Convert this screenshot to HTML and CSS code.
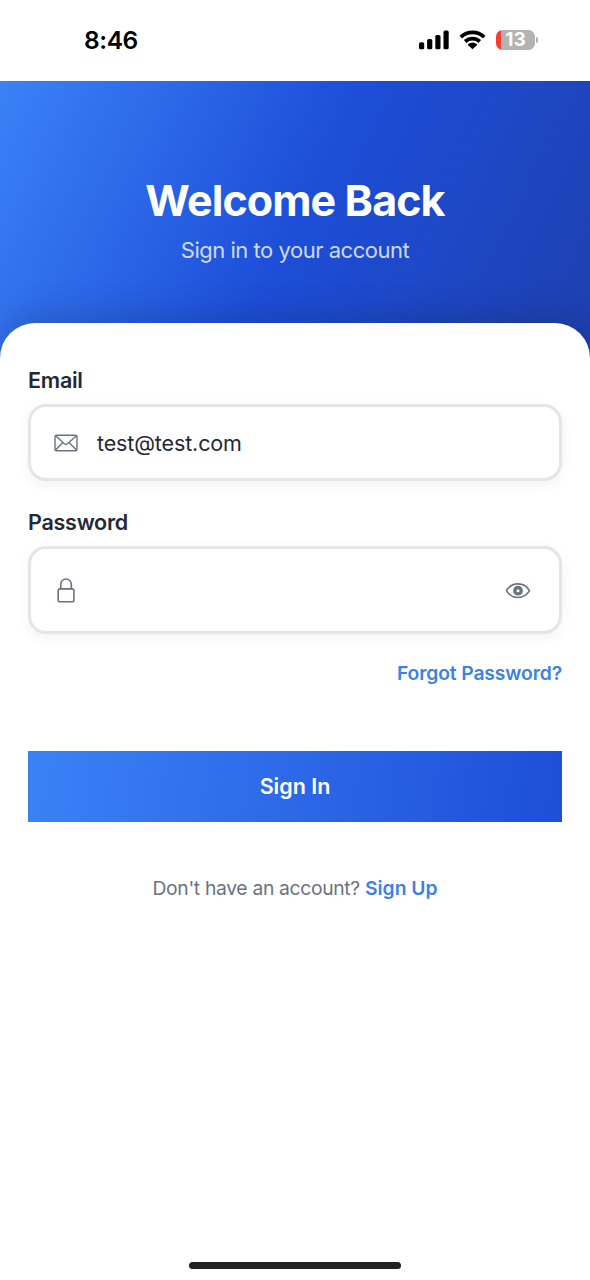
FILE: index.html
```html
<!DOCTYPE html>
<html lang="en">
<head>
<meta charset="utf-8">
<title>Sign In</title>
<link rel="stylesheet" href="styles.css">
</head>
<body>
<div class="screen">
  <div class="status-bar">
    <span class="time">8:46</span>
    <div class="indicators">
      <svg class="signal" width="30" height="20" viewBox="0 0 30 20">
        <rect x="0" y="12.2" width="5.2" height="7.1" rx="1.6"/>
        <rect x="8.1" y="9" width="5.2" height="10.3" rx="1.6"/>
        <rect x="16.3" y="5" width="5.2" height="14.3" rx="1.6"/>
        <rect x="24.5" y="0.6" width="5.2" height="18.7" rx="1.6"/>
      </svg>
      <svg class="wifi" width="27" height="20" viewBox="0 0 27 20">
        <path class="wifi-arc" d="M1.8 7.1a17 17 0 0 1 23.4 0M6.2 11.5a10.8 10.8 0 0 1 14.6 0"/>
        <path d="M13.5 19.3 9.2 15.2q-.5-.6.1-1.1a6.7 6.7 0 0 1 8.4 0q.6.5.1 1.1z"/>
      </svg>
      <div class="battery">
        <div class="battery-body"><span>13</span></div>
        <div class="battery-cap"></div>
      </div>
    </div>
  </div>
  <header class="hero">
    <h1 class="title">Welcome Back</h1>
    <p class="subtitle">Sign in to your account</p>
  </header>
  <main class="card">
    <label class="label">Email</label>
    <div class="field field-email">
      <svg class="icon mail" width="26" height="26" viewBox="0 0 26 26">
        <rect x="2" y="5.2" width="22" height="15.5" rx="1.8"/>
        <path d="M2.6 5.8 11.4 13.8q1.6 1.3 3.2 0L23.4 5.8M2.6 20.1l7.3-7.6M23.4 20.1l-7.3-7.6"/>
      </svg>
      <span class="value">test@test.com</span>
    </div>
    <label class="label label-password">Password</label>
    <div class="field field-password">
      <svg class="icon lock" width="26" height="26" viewBox="0 0 26 26">
        <rect x="5.2" y="11.9" width="15.7" height="12.8" rx="1.8"/>
        <path d="M7.7 11.9V7.3a5.3 5.3 0 0 1 10.6 0v4.6"/>
      </svg>
      <svg class="icon eye" width="26" height="26" viewBox="0 0 26 26">
        <path d="M1.5 13.7C6.8 4.6 19.2 4.6 24.5 13.7 19.2 22.8 6.8 22.8 1.5 13.7z"/>
        <circle class="iris" cx="13" cy="13.7" r="3.2"/>
      </svg>
    </div>
    <a class="forgot">Forgot Password?</a>
    <button class="submit">Sign In</button>
    <p class="signup">Don't have an account? <a class="signup-link">Sign Up</a></p>
    <div class="home-indicator"></div>
  </main>
</div>
</body>
</html>
```
FILE: styles.css
```css
* { box-sizing: border-box; }
body {
  margin: 0;
  background: #fff;
  font-family: Inter, "Liberation Sans", sans-serif;
  color: #1f2937;
}
.screen {
  display: flex;
  flex-direction: column;
  width: 590px;
  height: 1280px;
  overflow: hidden;
}
.status-bar {
  display: flex;
  flex: none;
  justify-content: space-between;
  height: 81px;
  padding: 25px 52px 0 84px;
}
.time {
  font-size: 24.5px;
  line-height: 31px;
  font-weight: 600;
  letter-spacing: -0.4px;
  color: #000;
}
.indicators {
  display: flex;
  align-items: center;
  gap: 10px;
  height: 30px;
}
.wifi-arc { fill: none; stroke: #000; stroke-width: 3.8; }
.battery { display: flex; align-items: center; gap: 1px; }
.battery-body {
  width: 39px;
  height: 20px;
  border-radius: 6.5px;
  background: linear-gradient(90deg, #f93b32 5px, #b3b3b3 5px);
  color: #fff;
  font-size: 19px;
  line-height: 20px;
  font-weight: 700;
  text-align: center;
}
.battery-cap {
  width: 2px;
  height: 6px;
  border-radius: 0 2px 2px 0;
  background: #b3b3b3;
}
.hero {
  flex: none;
  height: 277px;
  padding-top: 92px;
  background: linear-gradient(115.1deg, #3b82f6, #1d4ed8 50%, #1e40af);
  text-align: center;
}
.title {
  margin: 0;
  color: #fff;
  font-size: 43px;
  line-height: 54px;
  font-weight: 700;
  letter-spacing: -0.9px;
}
.subtitle {
  margin: 9px 0 0;
  color: rgba(255, 255, 255, 0.8);
  font-size: 22px;
  line-height: 28px;
  letter-spacing: -0.48px;
}
.card {
  display: flex;
  flex: 1;
  flex-direction: column;
  margin-top: -35px;
  padding: 43px 28px 0;
  border-radius: 35px 35px 0 0;
  background: #fff;
  box-shadow: 0 -7px 35px rgba(0, 0, 0, 0.16);
}
.label {
  font-size: 21.5px;
  line-height: 28px;
  font-weight: 600;
  letter-spacing: -0.25px;
}
.field {
  display: flex;
  align-items: center;
  border: 3px solid #e5e5e7;
  border-radius: 18px;
  background: #fff;
  box-shadow: 0 4px 14px rgba(0, 0, 0, 0.05);
}
.field-email {
  height: 77px;
  margin-top: 10px;
  padding-left: 22px;
  gap: 18px;
}
.label-password { margin-top: 27px; }
.field-password {
  justify-content: space-between;
  height: 88px;
  margin-top: 10px;
  padding: 0 28px 0 22px;
}
.icon {
  fill: none;
  stroke: #6b7280;
  stroke-width: 1.6;
  stroke-linecap: round;
  stroke-linejoin: round;
}
.mail { stroke-width: 1.4; }
.iris { stroke-width: 3.4; }
.value { font-size: 21.5px; line-height: 28px; letter-spacing: -0.13px; }
.forgot {
  align-self: flex-end;
  margin-top: 26px;
  color: #3b82e6;
  font-size: 19.3px;
  line-height: 26px;
  font-weight: 600;
  letter-spacing: -0.13px;
}
.submit {
  height: 71px;
  margin-top: 65px;
  padding: 0 0 2px;
  border: 0;
  background: linear-gradient(97.5deg, #3b82f6, #1d4ed8);
  color: #fff;
  font-family: inherit;
  font-size: 21.5px;
  font-weight: 600;
}
.signup {
  margin: 53px 0 0;
  color: #6b7280;
  font-size: 19.3px;
  line-height: 26px;
  letter-spacing: -0.32px;
  text-align: center;
}
.signup-link { color: #3b82e6; font-weight: 600; letter-spacing: 0; }
.home-indicator {
  align-self: center;
  width: 212px;
  height: 7px;
  margin: auto 0 11px;
  border-radius: 4px;
  background: #222;
}
```
